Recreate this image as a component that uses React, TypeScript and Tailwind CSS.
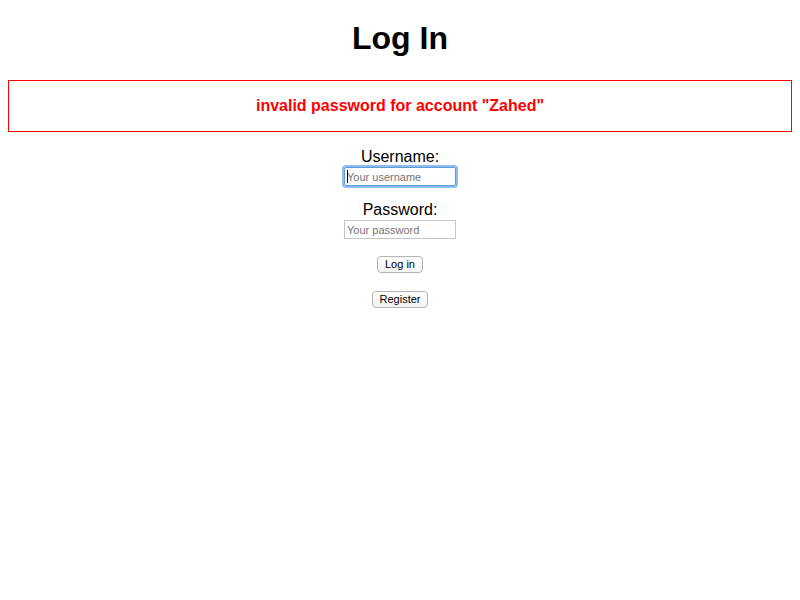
import React from 'react';

const App = () => {
  return (
    <div className="min-h-[600px] bg-white px-2 text-black" style={{ fontFamily: '"Liberation Sans", Arial, sans-serif' }}>
      <h1 className="pt-[20px] text-center text-[32px] font-bold leading-[37px]">Log In</h1>

      <div className="mt-[23px] border border-[#ff0000] py-4 text-center text-[16px] font-bold leading-[18px] text-[#ff0000]">
        invalid password for account "Zahed"
      </div>

      <form className="flex flex-col items-center" onSubmit={(e) => e.preventDefault()}>
        <label htmlFor="username" className="mt-[16px] text-[16px] leading-[18px]">Username:</label>
        <div className="relative mt-[1px]">
          <input
            id="username"
            placeholder="Your username"
            className="box-border block h-[19px] w-[112px] rounded-[2px] border border-[#5b9dd9] px-[2px] text-[11px] leading-[15px] shadow-[0_0_0_2px_#8fbcf3] outline-none placeholder:text-[#757575]"
          />
          <span className="absolute left-[3px] top-[3px] h-[13px] w-px bg-black" />
        </div>

        <label htmlFor="password" className="mt-[15px] text-[16px] leading-[18px]">Password:</label>
        <input
          id="password"
          type="password"
          placeholder="Your password"
          className="mt-[1px] box-border h-[19px] w-[112px] border border-[#c6c6c6] px-[2px] text-[11px] leading-[15px] outline-none placeholder:text-[#757575]"
        />

        <button className="mt-[17px] box-border h-[17px] rounded-[4px] border border-[#b5b5b5] bg-gradient-to-b from-white to-[#f3f3f3] px-[7px] text-[11px] leading-[15px]">
          Log in
        </button>
        <button type="button" className="mt-[18px] box-border h-[17px] rounded-[4px] border border-[#b5b5b5] bg-gradient-to-b from-white to-[#f3f3f3] px-[7px] text-[11px] leading-[15px]">
          Register
        </button>
      </form>
    </div>
  );
};

export default App;
